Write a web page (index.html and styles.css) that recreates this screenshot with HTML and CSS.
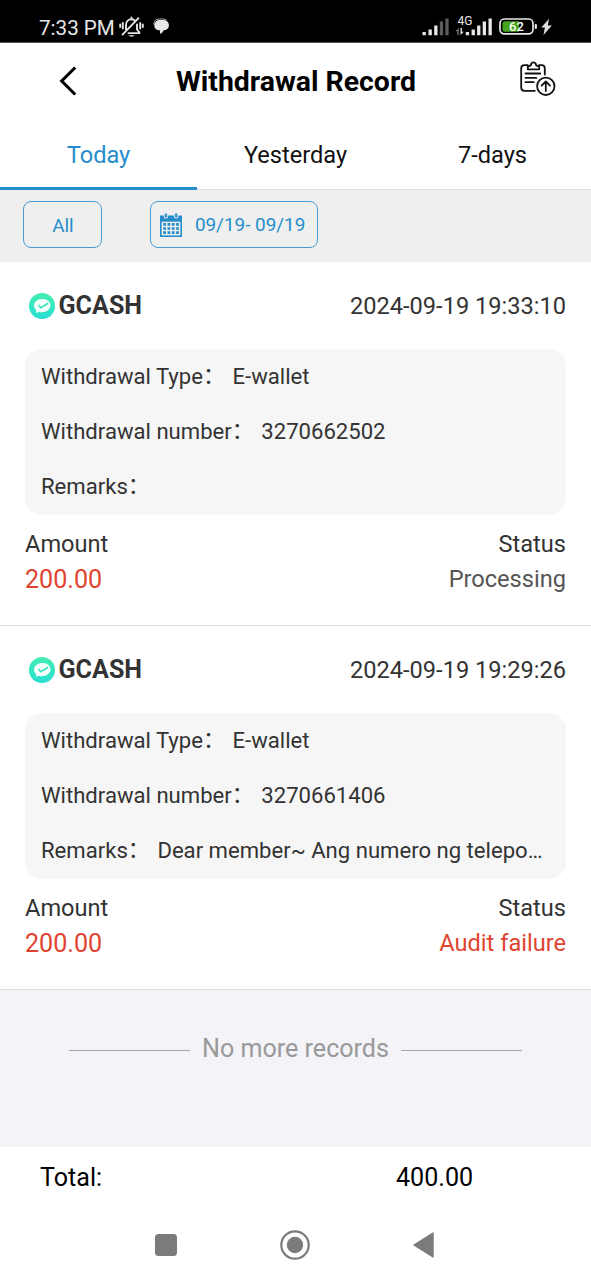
FILE: index.html
```html
<!DOCTYPE html>
<html lang="en">
<head>
<meta charset="utf-8">
<title>Withdrawal Record</title>
<link rel="stylesheet" href="styles.css">
</head>
<body>
<div class="screen">
  <div class="statusbar">
    <span class="clock">7:33 PM</span>
    <svg class="bell" width="25" height="22" viewBox="0 0 25 22" fill="none" stroke="#e4e4e4" stroke-width="1.9" stroke-linecap="round">
      <path d="M7 13.500V9c0-3.500 2.200-5.700 5.500-5.700 1.500 0 2.700.5 3.500 1.300M18 8.500v5l2.300 2.800v.8H9.500M3.500 18.600L19.500 2.200M3.800 7v5.500M1.200 8.500v2.600M21.200 7v5.500M23.800 8.500v2.600M12.500 1.500v1.400"/>
      <path d="M9.500 19.300h6c-.8 1.900-5.200 1.900-6 0z" fill="#e4e4e4" stroke="none"/>
    </svg>
    <svg class="chat" width="17" height="17" viewBox="0 0 17 17">
      <path d="M.7 6.500C.7 2.900 3 1 6.500 1h3.200c1.700 0 3 .4 4 1.200" fill="none" stroke="#aaa" stroke-width="1"/>
      <path d="M1.300 7.500C1.300 4 3.800 2 7 2h3c3.500 0 5.900 2.200 5.900 5.200 0 3.200-2.500 5.100-5.400 5.100-.5 1.600-1.600 2.900-3.200 3.700l-.5-3.700C3.500 12.300 1.300 10.600 1.300 7.500z" fill="#e8e8e8"/>
    </svg>
    <svg class="signals" width="134" height="24" viewBox="0 0 134 24">
      <g fill="#e8e8e8">
        <path d="M.5 17h3.300v3.300H.5zM6.500 14.500h3.300v5.800H6.500zM12.200 10.500h3.300v9.800h-3.300z"/>
        <path d="M43.800 17h3.300v3.300h-3.300zM49.600 14.500h3.300v5.800h-3.300zM55.100 10.500h3.300v9.800h-3.300zM60.700 6.500H64v13.800h-3.300zM66.500 3.600h3.300v16.700h-3.300z"/>
        <path d="M38.500 13v7l3.300-3.200h-1.900V13z"/>
      </g>
      <path d="M17.800 6.500h3.300v13.800h-3.300zM23.300 3.600h3.300v16.700h-3.300z" fill="#5c5c5c"/>
      <path d="M36.700 20v-7l-3.200 3.200h1.800V20z" fill="#777"/>
      <text x="35.500" y="9.800" class="net">4G</text>
      <rect x="78" y="4" width="33" height="14.800" rx="4.300" fill="#000" stroke="#e8e8e8" stroke-width="1.700"/>
      <path d="M83 6.200h14v10.500H83q-2.500 0-2.500-2.500V8.700q0-2.500 2.500-2.500z" fill="#46a51c"/>
      <rect x="112.700" y="9" width="2.200" height="5" rx="1" fill="#e8e8e8"/>
      <text x="94.500" y="16" text-anchor="middle" class="pct">62</text>
      <path d="M127 3.700l-7.700 8.800h3.600L121.500 20l8.300-9.500h-4z" fill="#e0e0e0"/>
    </svg>
  </div>

  <header class="titlebar">
    <svg class="back" width="18" height="30" viewBox="0 0 18 30" fill="none" stroke="#000" stroke-width="3.100"><path d="M16.200 1.500L2.700 15l13.500 13.500"/></svg>
    <h1 class="title">Withdrawal Record</h1>
    <svg class="clip" width="36" height="36" viewBox="0 0 36 36" fill="none" stroke="#111" stroke-width="1.800" stroke-linecap="round" stroke-linejoin="round">
      <path d="M7.800 4.200H4.500C2.500 4.200 1.200 5.500 1.200 7.500v19c0 2 1.300 3.300 3.300 3.300h10.300M19 4.200h2.500c2 0 3.300 1.300 3.300 3.300v6"/>
      <path d="M7.800 8.300V5.700l3-1.300c.3-2 1.300-3 2.700-3s2.400 1 2.700 3l3 1.300v2.600z"/>
      <path d="M5.500 12.500h14.700M5.500 16.900h10.800M5.500 21.200h8.200"/>
      <circle cx="25.800" cy="25.300" r="8.700"/>
      <path d="M25.800 30v-9M21.600 24.700l4.200-4.200 4.200 4.200"/>
    </svg>
  </header>

  <nav class="tabs">
    <span class="tab tab-on">Today</span>
    <span class="tab">Yesterday</span>
    <span class="tab">7-days</span>
  </nav>

  <div class="filters">
    <span class="chip chip-all">All</span>
    <span class="chip chip-date">
      <svg width="22" height="24" viewBox="0 0 22 24">
        <path d="M0 2.500h22V24H0z" fill="#268dcc"/>
        <path d="M1.600 8.700h18.800v13.700H1.600z" fill="#efefef"/>
        <path d="M4.300 0h3v5h-3zM14.700 0h3v5h-3z" fill="#268dcc" stroke="#efefef" stroke-width=".9"/>
        <path d="M3.200 11.300h15.700M3.200 15.500h15.700M3.200 19.700h15.700" stroke="#268dcc" stroke-width="2.700" stroke-dasharray="2.800 1.500"/>
      </svg>
      <span class="range">09/19- 09/19</span>
    </span>
  </div>

  <section class="record">
    <div class="record-head">
      <svg class="logo" width="28" height="28" viewBox="0 0 28 28">
        <defs><linearGradient id="mint" x1="0" y1="0" x2="0" y2="1"><stop offset="0" stop-color="#43edb0"/><stop offset="1" stop-color="#27dfd2"/></linearGradient></defs>
        <circle cx="14" cy="14" r="13" fill="url(#mint)"/>
        <path d="M14.200 7c4.800 0 8.300 2.600 8.300 6.300s-3.700 7-8.500 7c-1.200 0-2.200-.1-3.200-.5L8 21l.3-2.700C6.800 17.200 6 15.600 6 13.800 6 9.900 9.700 7 14.200 7z" fill="#f3fffb"/>
        <path d="M10.500 13.200l2.300 2.500 7.400-4.500" fill="none" stroke="#40dfbb" stroke-width="1.700"/>
      </svg>
      <b class="brand">GCASH</b>
      <time class="when">2024-09-19 19:33:10</time>
    </div>
    <div class="details">
      <p class="row">Withdrawal Type<span class="colon">：</span> E-wallet</p>
      <p class="row">Withdrawal number<span class="colon">：</span> 3270662502</p>
      <p class="row">Remarks<span class="colon">：</span></p>
    </div>
    <div class="summary"><span>Amount</span><span>Status</span></div>
    <div class="values"><span class="amount">200.00</span><span class="state">Processing</span></div>
  </section>

  <section class="record">
    <div class="record-head">
      <svg class="logo" width="28" height="28" viewBox="0 0 28 28">
        <circle cx="14" cy="14" r="13" fill="url(#mint)"/>
        <path d="M14.200 7c4.800 0 8.300 2.600 8.300 6.300s-3.700 7-8.500 7c-1.200 0-2.200-.1-3.200-.5L8 21l.3-2.700C6.800 17.200 6 15.600 6 13.800 6 9.900 9.700 7 14.200 7z" fill="#f3fffb"/>
        <path d="M10.500 13.200l2.300 2.500 7.400-4.500" fill="none" stroke="#40dfbb" stroke-width="1.700"/>
      </svg>
      <b class="brand">GCASH</b>
      <time class="when">2024-09-19 19:29:26</time>
    </div>
    <div class="details">
      <p class="row">Withdrawal Type<span class="colon">：</span> E-wallet</p>
      <p class="row">Withdrawal number<span class="colon">：</span> 3270661406</p>
      <p class="row">Remarks<span class="colon">：</span> Dear member~ Ang numero ng telepo…</p>
    </div>
    <div class="summary"><span>Amount</span><span>Status</span></div>
    <div class="values"><span class="amount">200.00</span><span class="state state-bad">Audit failure</span></div>
  </section>

  <div class="end"><i class="rule"></i><span>No more records</span><i class="rule"></i></div>

  <div class="total"><span>Total:</span><span class="sum">400.00</span></div>

  <div class="navkeys">
    <svg width="22" height="22" viewBox="0 0 22 22"><rect width="22" height="22" rx="3.500" fill="#7b7b7b"/></svg>
    <svg width="30" height="30" viewBox="0 0 30 30"><circle cx="15" cy="15" r="13.700" fill="none" stroke="#7b7b7b" stroke-width="2.200"/><circle cx="15" cy="15" r="8.200" fill="#7b7b7b"/></svg>
    <svg width="21" height="26" viewBox="0 0 21 26"><path d="M1 13L20 1v24z" fill="#7b7b7b" stroke="#7b7b7b" stroke-width="1.400" stroke-linejoin="round"/></svg>
  </div>
</div>
</body>
</html>
```
FILE: styles.css
```css
* { box-sizing: border-box; }
body {
  margin: 0;
  background: #fff;
  font-family: Roboto, "Noto Sans CJK SC", sans-serif;
  color: #333;
}
svg { display: block; flex: none; }
.screen {
  width: 591px;
  height: 1280px;
  display: flex;
  flex-direction: column;
  overflow: hidden;
}
.statusbar {
  height: 43px;
  flex: none;
  display: flex;
  align-items: center;
  padding: 12px 35px 0 39px;
  background: #000;
  border-bottom: 1px solid #555;
  color: #e8e8e8;
}
.clock { width: 79px; padding-top: 1px; font-size: 20.6px; line-height: 30px; white-space: nowrap; }
.bell { margin-left: 1px; margin-top: -1px; }
.chat { margin-left: 9px; margin-top: -1px; }
.signals { margin-left: auto; margin-top: -1px; }
.net { font-size: 12px; fill: #e8e8e8; }
.pct { font-size: 13px; font-weight: 500; fill: #fff; }
.titlebar {
  height: 79px;
  flex: none;
  display: flex;
  align-items: center;
  padding: 0 35px 3px 59px;
}
.title {
  flex: 1;
  margin: 0;
  padding: 2px 5px 0 0;
  font-size: 28.4px;
  line-height: 36px;
  font-weight: 700;
  color: #000;
  text-align: center;
  white-space: nowrap;
}
.clip { margin-top: -4px; }
.tabs {
  height: 68px;
  flex: none;
  display: flex;
  border-bottom: 1px solid #ddd;
}
.tab {
  flex: 1;
  height: 68px;
  line-height: 66px;
  font-size: 23.6px;
  color: #111;
  text-align: center;
}
.tab-on { color: #268dcc; border-bottom: 3px solid #268dcc; }
.filters {
  height: 72px;
  flex: none;
  display: flex;
  align-items: flex-start;
  gap: 47.500px;
  padding: 11px 23.400px 0;
  background: #efefef;
}
.chip {
  height: 47px;
  display: flex;
  align-items: center;
  border: 1px solid #4a9bd3;
  border-radius: 8px;
  color: #268dcc;
  font-size: 18.9px;
  line-height: 46px;
}
.chip-all { width: 79px; justify-content: center; padding-top: 2px; }
.chip-date { width: 168px; padding-left: 9px; gap: 13px; white-space: nowrap; }
.record {
  height: 364px;
  flex: none;
  padding: 0 25px;
  border-bottom: 1px solid #ddd;
}
.record-head { height: 87px; display: flex; align-items: center; padding-left: 3px; }
.brand { margin-left: 2.5px; font-size: 25.1px; line-height: 30px; }
.when { margin-left: auto; font-size: 23.6px; }
.details {
  height: 166px;
  padding: 0 16px;
  background: #f6f6f6;
  border-radius: 17px;
}
.row {
  height: 55px;
  margin: 0;
  font-size: 22.1px;
  line-height: 55px;
  white-space: nowrap;
}
.colon { margin-right: 2px; line-height: 1; vertical-align: 1px; }
.summary, .values {
  height: 35px;
  display: flex;
  justify-content: space-between;
  line-height: 35px;
  font-size: 23.6px;
}
.summary { margin-top: 12px; }
.amount { font-size: 25.1px; color: #df4430; }
.state { color: #555; }
.state-bad { color: #df4430; }
.end {
  height: 157px;
  flex: none;
  display: flex;
  justify-content: center;
  gap: 12px;
  padding-top: 42px;
  background: #f3f3f8;
  color: #999;
  font-size: 25.1px;
  line-height: 34px;
}
.rule { width: 121px; height: 1px; margin-top: 18px; background: #a6a6a9; }
.total {
  height: 62px;
  flex: none;
  display: grid;
  grid-template-columns: 356px 1fr;
  padding-left: 40px;
  line-height: 62px;
  font-size: 25.1px;
  color: #000;
}
.navkeys {
  height: 71px;
  flex: none;
  display: flex;
  align-items: center;
  justify-content: space-between;
  padding: 0 157px 0 155px;
}
```
